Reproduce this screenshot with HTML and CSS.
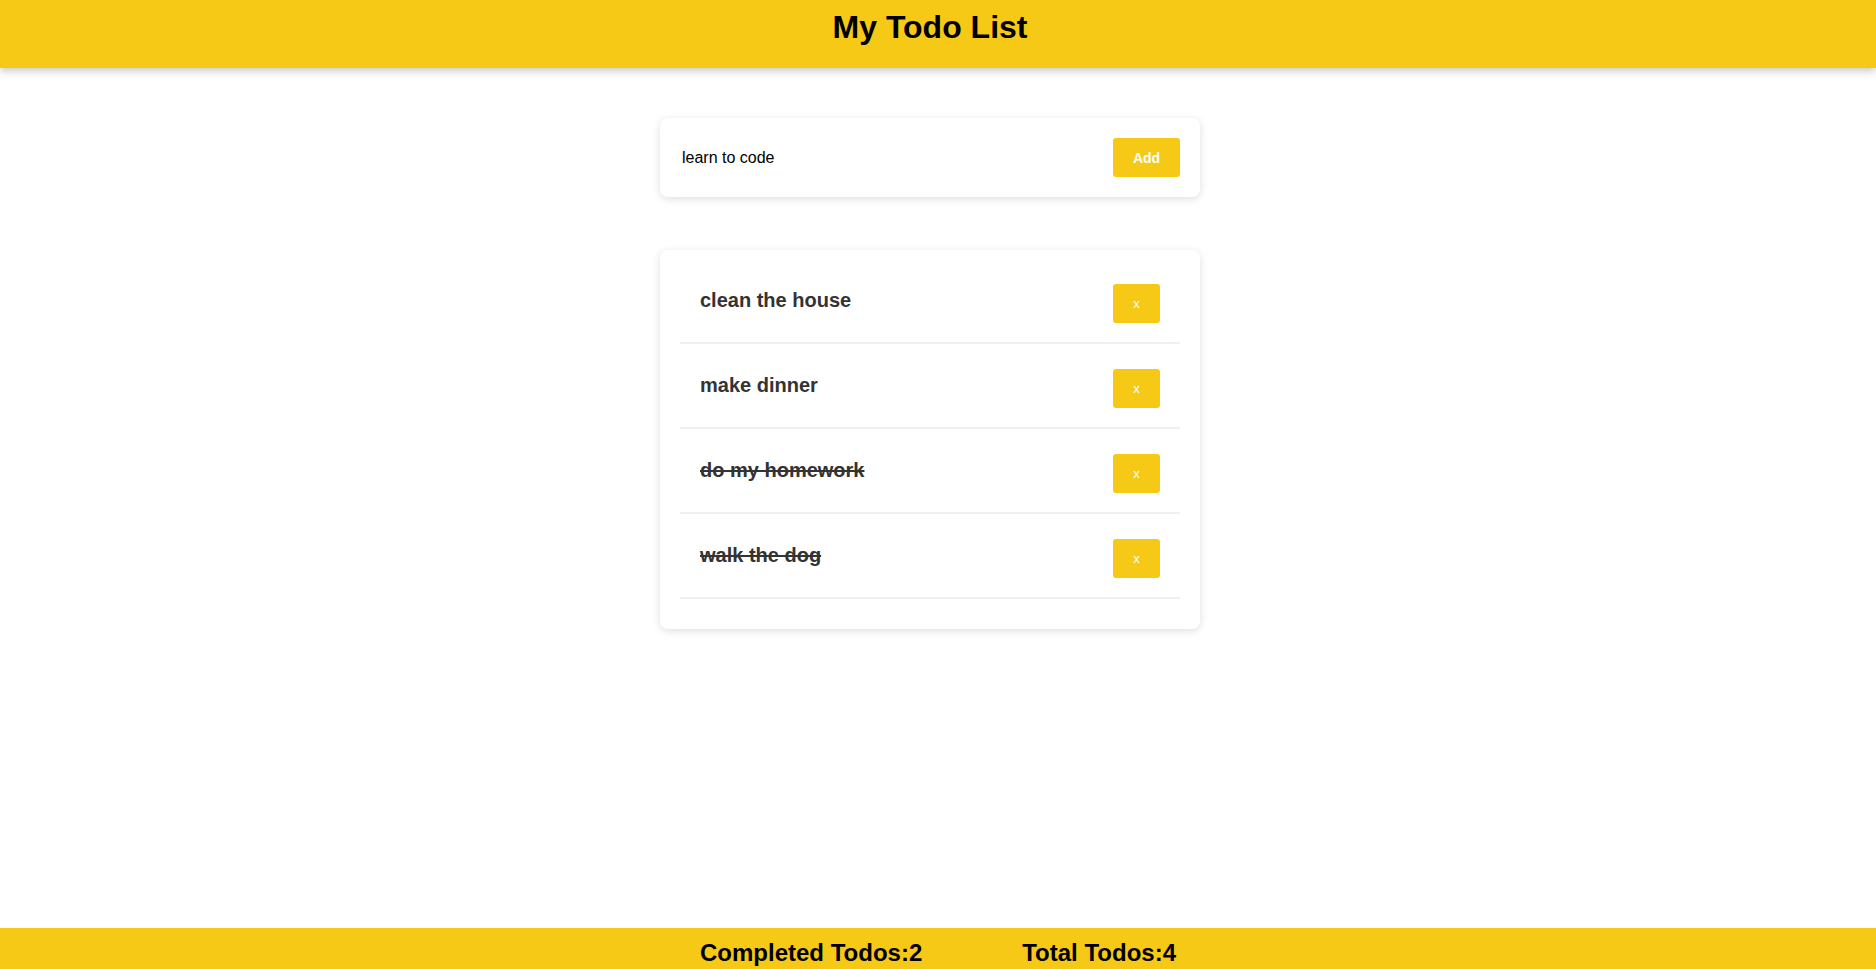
FILE: index.html
```html
<!DOCTYPE html>
<html>
<head>
<meta charset="utf-8">
<title>My Todo List</title>
<link rel="stylesheet" href="styles.css">
</head>
<body>
<header class="top-bar">
  <h1 class="title">My Todo List</h1>
</header>
<main class="main">
  <form class="card add-form" onsubmit="return false">
    <input class="add-input" type="text" value="learn to code">
    <button class="btn btn-add" type="submit">Add</button>
  </form>
  <div class="card list-card">
    <ul class="todo-list">
      <li class="todo-item"><span class="todo-text">clean the house</span><button class="btn btn-del">x</button></li>
      <li class="todo-item"><span class="todo-text">make dinner</span><button class="btn btn-del">x</button></li>
      <li class="todo-item done"><span class="todo-text">do my homework</span><button class="btn btn-del">x</button></li>
      <li class="todo-item done"><span class="todo-text">walk the dog</span><button class="btn btn-del">x</button></li>
    </ul>
  </div>
</main>
<footer class="bottom-bar">
  <span class="stat">Completed Todos:2</span>
  <span class="stat">Total Todos:4</span>
</footer>
</body>
</html>
```

FILE: styles.css
```css
* { box-sizing: border-box; }
html, body { margin: 0; padding: 0; }
body {
  font-family: "Liberation Sans", Arial, sans-serif;
  background: #fff;
  color: #000;
  min-height: 100vh;
  display: flex;
  flex-direction: column;
}
.top-bar {
  background: #f7c917;
  height: 68px;
  padding: 9px 16px 0 0;
  box-shadow: 0 3px 8px rgba(0,0,0,0.22);
  position: relative;
  z-index: 1;
}
.title {
  margin: 0;
  text-align: center;
  font-size: 32px;
  line-height: 37px;
  font-weight: 700;
}
.main {
  display: flex;
  flex-direction: column;
  align-items: center;
  padding: 50px 16px 0 0;
  gap: 53px;
}
.card {
  width: 540px;
  background: #fff;
  border-radius: 8px;
  box-shadow: 0 2px 8px rgba(0,0,0,0.13);
}
.add-form {
  display: flex;
  align-items: center;
  padding: 20px;
  margin: 0;
}
.add-input {
  flex: 1;
  border: none;
  outline: none;
  font-family: "Liberation Sans", Arial, sans-serif;
  font-size: 16px;
  color: #000;
  padding: 0 2px;
  background: transparent;
}
.btn {
  background: #f7c917;
  color: #fff;
  border: none;
  border-radius: 3px;
  font-family: "Liberation Sans", Arial, sans-serif;
  cursor: pointer;
  padding: 0;
}
.btn-add {
  width: 67px;
  height: 39px;
  font-size: 14px;
  font-weight: 700;
}
.list-card {
  padding: 9px 20px 30px;
}
.todo-list {
  list-style: none;
  margin: 0;
  padding: 0;
}
.todo-item {
  display: flex;
  align-items: center;
  justify-content: space-between;
  padding: 25px 20px 19px 20px;
  border-bottom: 2px solid #f0f0f0;
}
.todo-text {
  font-size: 20px;
  font-weight: 700;
  color: #333;
  padding-bottom: 7px;
}
.done .todo-text {
  text-decoration: line-through;
}
.btn-del {
  width: 47px;
  height: 39px;
  font-size: 13px;
}
.bottom-bar {
  margin-top: auto;
  background: #f7c917;
  height: 41px;
  display: flex;
  justify-content: center;
  gap: 100px;
  padding-top: 11px;
}
.stat {
  font-size: 24px;
  line-height: 28px;
  font-weight: 700;
}
```
